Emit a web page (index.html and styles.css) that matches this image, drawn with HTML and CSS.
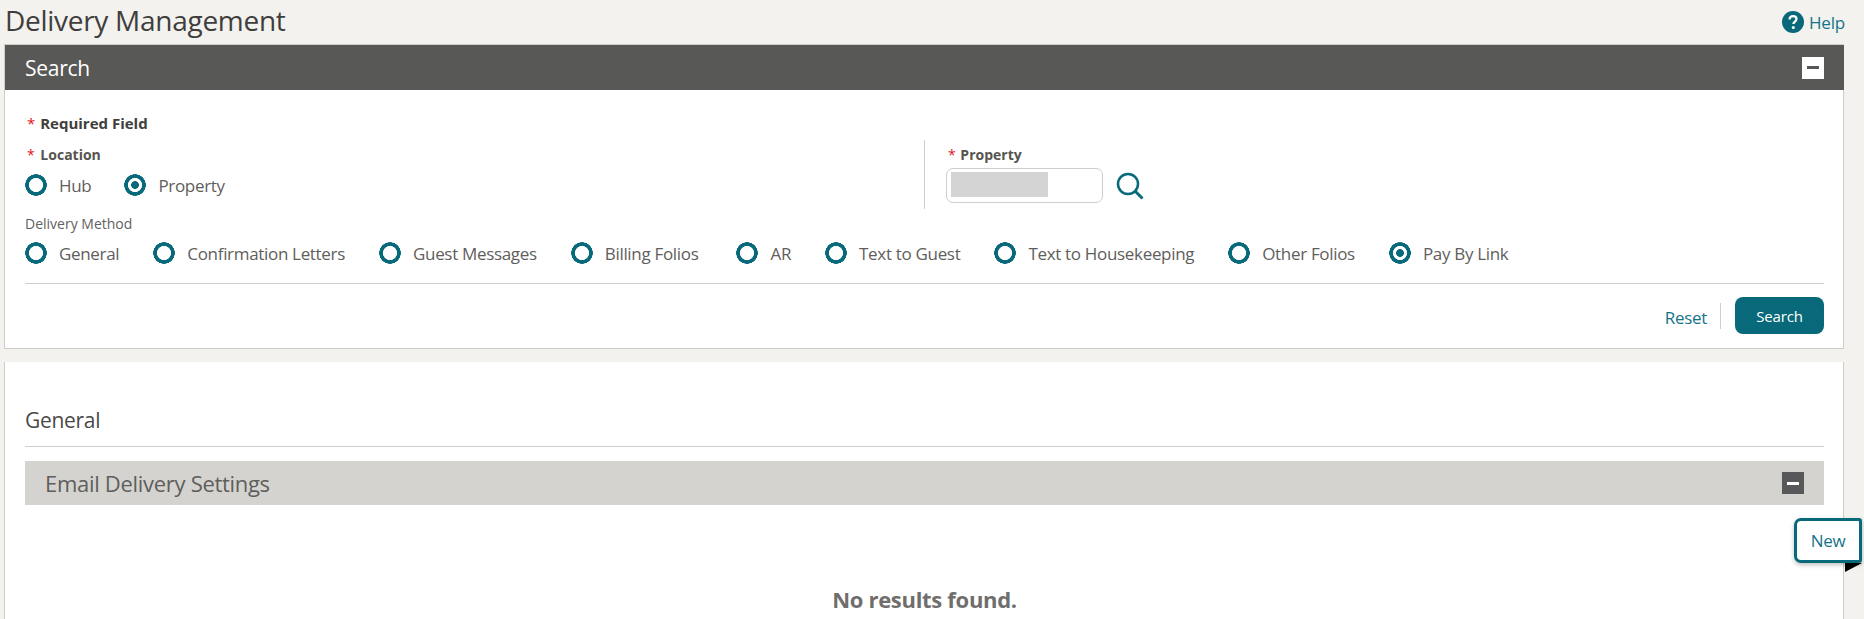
FILE: index.html
```html
<!DOCTYPE html>
<html lang="en">
<head>
<meta charset="utf-8">
<title>Delivery Management</title>
<link rel="stylesheet" href="styles.css">
</head>
<body>
<header class="page-head">
  <h1 class="page-title">Delivery Management</h1>
  <a class="help"><svg class="help-icon" viewBox="0 0 22 22"><circle cx="11" cy="11" r="11" fill="#07697a"/><path d="M7.600 8.600c0-2.200 1.500-3.500 3.500-3.500s3.400 1.200 3.400 3c0 1.500-.9 2.200-1.900 2.900-.9.600-1.200 1-1.200 2.100" fill="none" stroke="#fff" stroke-width="2.200"/><circle cx="11.300" cy="16.500" r="1.500" fill="#fff"/></svg><span>Help</span></a>
</header>

<section class="panel search-panel">
  <div class="panel-head">
    <h2 class="panel-title">Search</h2>
    <span class="toggle toggle-light"><i></i></span>
  </div>
  <div class="panel-body">
    <div class="required"><b class="star">*</b> Required Field</div>
    <div class="loc-row">
      <div class="loc-col">
        <div class="field-label"><b class="star">*</b> Location</div>
        <div class="radios radios-loc">
          <label class="radio"><i class="dot"></i>Hub</label>
          <label class="radio"><i class="dot on"></i>Property</label>
        </div>
      </div>
      <div class="prop-col">
        <div class="field-label"><b class="star">*</b> Property</div>
        <div class="prop-input">
          <div class="input"><span class="redact"></span></div>
          <svg class="lens" viewBox="0 0 28 28"><circle cx="12" cy="12" r="10" fill="none" stroke="#07697a" stroke-width="2.500"/><path d="M19 19l7.500 7.500" stroke="#07697a" stroke-width="3" fill="none"/></svg>
        </div>
      </div>
    </div>
    <div class="method-label">Delivery Method</div>
    <div class="radios radios-method">
      <label class="radio"><i class="dot"></i>General</label>
      <label class="radio"><i class="dot"></i>Confirmation Letters</label>
      <label class="radio"><i class="dot"></i>Guest Messages</label>
      <label class="radio radio-wide"><i class="dot"></i>Billing Folios</label>
      <label class="radio"><i class="dot"></i>AR</label>
      <label class="radio"><i class="dot"></i>Text to Guest</label>
      <label class="radio"><i class="dot"></i>Text to Housekeeping</label>
      <label class="radio"><i class="dot"></i>Other Folios</label>
      <label class="radio"><i class="dot on"></i>Pay By Link</label>
    </div>
    <div class="actions">
      <a class="reset">Reset</a>
      <span class="sep"></span>
      <button class="btn">Search</button>
    </div>
  </div>
</section>

<section class="panel result-panel">
  <h2 class="section-title">General</h2>
  <div class="sub-head">
    <h3 class="sub-title">Email Delivery Settings</h3>
    <span class="toggle toggle-dark"><i></i></span>
  </div>
  <p class="empty">No results found.</p>
</section>

<div class="new-pop">New</div>
<div class="new-tail"></div>
</body>
</html>
```
FILE: styles.css
```css
* { box-sizing: border-box; }
html { height: 619px; overflow: hidden; }
body {
  margin: 0;
  height: 619px;
  overflow: hidden;
  background: #f3f2ee;
  color: #5f5e5c;
  font-family: "Open Sans", "Noto Sans", sans-serif;
  font-size: 17px;
  position: relative;
}
.page-head {
  height: 44px;
  margin: 0 19px 0 5px;
  display: flex;
  justify-content: space-between;
  align-items: center;
}
.page-title { margin: -4px 0 0; font-size: 28px; font-weight: 400; color: #3f3e3c; letter-spacing: -0.28px; }
.help { display: flex; align-items: center; gap: 5px; color: #16748a; font-size: 17px; letter-spacing: -0.2px; }
.help-icon { width: 22px; height: 22px; }
.panel {
  margin: 0 20px 0 4px;
  background: #fff;
  border: 1px solid #cfcecb;
}
.search-panel { height: 305px; }
.panel-head {
  height: 45px;
  margin: 0 -1px 0 0;
  background: #585856;
  display: flex;
  align-items: center;
  justify-content: space-between;
  padding: 0 20px;
}
.panel-title { margin: 0; font-size: 21px; font-weight: 400; color: #fff; letter-spacing: -0.25px; }
.toggle { width: 22px; height: 22px; display: flex; align-items: center; justify-content: center; }
.toggle i { width: 12px; height: 3px; display: block; }
.toggle-light { background: #fff; }
.toggle-light i { background: #58585a; }
.toggle-dark { background: #58585a; }
.toggle-dark i { background: #fff; }
.panel-body { padding: 23px 19px 0 20px; }
.star { color: #e0131a; font-weight: 400; margin: 0 2px 0 2px; }
.required .star, .prop-col .star { margin-right: 1px; }
.required, .field-label { font-weight: 700; line-height: 20px; height: 20px; }
.required { font-size: 15px; color: #3f3e3c; }
.field-label { font-size: 14px; color: #55544f; }
.loc-row { display: flex; margin-top: 12px; }
.loc-col { width: 900px; flex: none; border-right: 1px solid #cfcecb; height: 69px; margin-top: -5px; padding-top: 5px; }
.prop-col { padding-left: 21px; }
.radios { display: flex; }
.radios-loc { gap: 33px; margin-top: 8px; }
.radios-method { gap: 34px; margin-top: 8px; padding-bottom: 18px; border-bottom: 1px solid #cfcecb; }
.radio { display: flex; align-items: center; gap: 12px; height: 24px; font-size: 17px; color: #5f5e5c; letter-spacing: -0.32px; white-space: nowrap; }
.radio-wide { margin-right: 4px; }
.dot { width: 22px; height: 22px; border-radius: 50%; display: block; flex: none; background: radial-gradient(circle, #fff 0 6.8px, #07697a 7.3px 10.6px, transparent 11px); }
.dot.on { background: radial-gradient(circle, #07697a 0 3.6px, #fff 4.1px 6.8px, #07697a 7.3px 10.6px, transparent 11px); }
.prop-input { display: flex; align-items: center; gap: 13px; margin-top: 3px; }
.input { width: 157px; height: 35px; border: 1px solid #cfcecb; border-radius: 7px; padding: 3px 4px; }
.redact { display: block; width: 97px; height: 25px; background: #d4d4d4; }
.lens { width: 28px; height: 28px; }
.method-label { font-size: 14px; line-height: 18px; margin-top: 6px; color: #62615f; }
.actions { display: flex; align-items: center; justify-content: flex-end; margin-top: 13px; }
.reset { color: #16748a; font-size: 17px; letter-spacing: -0.3px; margin-top: 4px; }
.sep { width: 1px; height: 26px; background: #cfcecb; margin: 0 14px 0 13px; }
.btn { width: 89px; height: 37px; border: 0; border-radius: 8px; background: #07697a; color: #fff; font-family: "Open Sans", sans-serif; font-weight: 400; font-size: 15px; letter-spacing: -0.2px; }
.result-panel {
  margin-top: 13px;
  height: 257px;
  border-top: 0;
  border-bottom: 0;
  overflow: hidden;
  padding: 43px 19px 0 20px;
}
.section-title { margin: 0; height: 42px; line-height: 30px; font-size: 21px; font-weight: 400; color: #4a4947; border-bottom: 1px solid #cfcecb; letter-spacing: -0.3px; }
.sub-head { margin-top: 14px; height: 44px; background: #d4d3cf; display: flex; align-items: center; justify-content: space-between; padding: 0 20px; }
.sub-title { margin: 0; font-size: 22px; font-weight: 400; color: #5f5e5c; letter-spacing: -0.3px; }
.empty { margin: 79px 0 0; text-align: center; font-size: 22px; line-height: 30px; font-weight: 700; color: #6f6e6c; letter-spacing: -0.3px; }
.new-pop {
  position: absolute;
  left: 1794px;
  top: 518px;
  width: 68px;
  height: 45px;
  background: #fff;
  border: 3px solid #07697a;
  border-radius: 7px 3px 3px 7px;
  box-shadow: 0 2px 4px rgba(0,0,0,.25);
  color: #16748a;
  font-size: 17px;
  display: flex;
  align-items: center;
  justify-content: center;
  letter-spacing: -0.3px;
}
.new-tail {
  position: absolute;
  left: 1845px;
  top: 563px;
  width: 0;
  height: 0;
  border-top: 9px solid #000;
  border-right: 17px solid transparent;
}
```
